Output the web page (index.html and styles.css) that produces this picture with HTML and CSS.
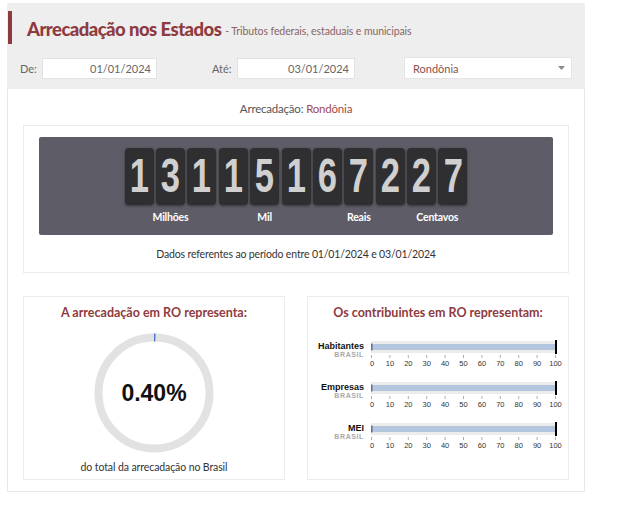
FILE: index.html
```html
<!DOCTYPE html>
<html lang="pt-BR">
<head>
<meta charset="utf-8">
<title>Arrecadação nos Estados</title>
<link rel="stylesheet" href="styles.css">
</head>
<body>
<div class="app">
  <header class="head">
    <div class="title-row">
      <h1 class="title">Arrecadação nos Estados</h1>
      <span class="subtitle">- Tributos federais, estaduais e municipais</span>
    </div>
    <div class="filters">
      <span class="flabel flabel-de">De:</span>
      <div class="input input-de">01/01/2024</div>
      <span class="flabel flabel-ate">Até:</span>
      <div class="input input-ate">03/01/2024</div>
      <div class="select">
        <span>Rondônia</span>
        <svg class="caret" width="7" height="4" viewBox="0 0 7 4"><path d="M0 0 L7 0 L3.5 4 Z" fill="#8a8a8a"/></svg>
      </div>
    </div>
  </header>

  <main class="content">
    <div class="state-line">Arrecadação: <span class="state-name">Rondônia</span></div>

    <section class="card counter-card">
      <div class="counter">
        <div class="tiles">
          <div class="tile"><span>1</span></div><div class="tile"><span>3</span></div><div class="tile"><span>1</span></div>
          <div class="tile"><span>1</span></div><div class="tile"><span>5</span></div><div class="tile"><span>1</span></div>
          <div class="tile"><span>6</span></div><div class="tile"><span>7</span></div><div class="tile"><span>2</span></div>
          <div class="tile"><span>2</span></div><div class="tile"><span>7</span></div>
          <div class="unit u-mi">Milhões</div>
          <div class="unit u-mil">Mil</div>
          <div class="unit u-re">Reais</div>
          <div class="unit u-ce">Centavos</div>
        </div>
      </div>
      <p class="period">Dados referentes ao período entre 01/01/2024 e 03/01/2024</p>
    </section>

    <div class="row">
      <section class="card share">
        <h2 class="card-title">A arrecadação em RO representa:</h2>
        <div class="donut">
          <svg width="122" height="122" viewBox="0 0 122 122">
            <circle cx="61" cy="61" r="55.5" fill="none" stroke="#e2e2e2" stroke-width="8"/>
            <path d="M61 5.5 A55.5 55.5 0 0 1 62.4 5.52" fill="none" stroke="#4a78c8" stroke-width="8"/>
          </svg>
          <span class="pct">0.40%</span>
        </div>
        <p class="share-note">do total da arrecadação no Brasil</p>
      </section>

      <section class="card contrib">
        <h2 class="card-title">Os contribuintes em RO representam:</h2>
        <div class="bars">
          <div class="bar-row">
            <div class="bar-label"><b>Habitantes</b><span>BRASIL</span></div>
            <svg class="bar-chart" width="190" height="31" viewBox="0 0 190 31">
              <rect x="0" y="1" width="186" height="12" fill="#ececec"/>
              <rect x="0" y="4" width="184" height="6" fill="#b3c6de"/>
              <rect x="0" y="3.5" width="1.5" height="7" fill="#5c6f8c"/>
              <rect x="184" y="0" width="2" height="14" fill="#000"/>
              <g class="ticks" stroke="#999" stroke-width="0.8">
                <line x1="0.5" y1="15" x2="0.5" y2="18"/><line x1="18.9" y1="15" x2="18.9" y2="18"/><line x1="37.3" y1="15" x2="37.3" y2="18"/><line x1="55.7" y1="15" x2="55.7" y2="18"/><line x1="74.1" y1="15" x2="74.1" y2="18"/><line x1="92.5" y1="15" x2="92.5" y2="18"/><line x1="110.9" y1="15" x2="110.9" y2="18"/><line x1="129.3" y1="15" x2="129.3" y2="18"/><line x1="147.7" y1="15" x2="147.7" y2="18"/><line x1="166.1" y1="15" x2="166.1" y2="18"/><line x1="184.5" y1="15" x2="184.5" y2="18"/>
              </g>
              <g class="axis-text" text-anchor="middle">
                <text x="1" y="26">0</text><text x="18.9" y="26">10</text><text x="37.3" y="26">20</text><text x="55.7" y="26">30</text><text x="74.1" y="26">40</text><text x="92.5" y="26">50</text><text x="110.9" y="26">60</text><text x="129.3" y="26">70</text><text x="147.7" y="26">80</text><text x="166.1" y="26">90</text><text x="184.5" y="26">100</text>
              </g>
            </svg>
          </div>
          <div class="bar-row">
            <div class="bar-label"><b>Empresas</b><span>BRASIL</span></div>
            <svg class="bar-chart" width="190" height="31" viewBox="0 0 190 31">
              <rect x="0" y="1" width="186" height="12" fill="#ececec"/>
              <rect x="0" y="4" width="184" height="6" fill="#b3c6de"/>
              <rect x="0" y="3.5" width="1.5" height="7" fill="#5c6f8c"/>
              <rect x="184" y="0" width="2" height="14" fill="#000"/>
              <g class="ticks" stroke="#999" stroke-width="0.8">
                <line x1="0.5" y1="15" x2="0.5" y2="18"/><line x1="18.9" y1="15" x2="18.9" y2="18"/><line x1="37.3" y1="15" x2="37.3" y2="18"/><line x1="55.7" y1="15" x2="55.7" y2="18"/><line x1="74.1" y1="15" x2="74.1" y2="18"/><line x1="92.5" y1="15" x2="92.5" y2="18"/><line x1="110.9" y1="15" x2="110.9" y2="18"/><line x1="129.3" y1="15" x2="129.3" y2="18"/><line x1="147.7" y1="15" x2="147.7" y2="18"/><line x1="166.1" y1="15" x2="166.1" y2="18"/><line x1="184.5" y1="15" x2="184.5" y2="18"/>
              </g>
              <g class="axis-text" text-anchor="middle">
                <text x="1" y="26">0</text><text x="18.9" y="26">10</text><text x="37.3" y="26">20</text><text x="55.7" y="26">30</text><text x="74.1" y="26">40</text><text x="92.5" y="26">50</text><text x="110.9" y="26">60</text><text x="129.3" y="26">70</text><text x="147.7" y="26">80</text><text x="166.1" y="26">90</text><text x="184.5" y="26">100</text>
              </g>
            </svg>
          </div>
          <div class="bar-row">
            <div class="bar-label"><b>MEI</b><span>BRASIL</span></div>
            <svg class="bar-chart" width="190" height="31" viewBox="0 0 190 31">
              <rect x="0" y="1" width="186" height="12" fill="#ececec"/>
              <rect x="0" y="4" width="184" height="6" fill="#b3c6de"/>
              <rect x="0" y="3.5" width="1.5" height="7" fill="#5c6f8c"/>
              <rect x="184" y="0" width="2" height="14" fill="#000"/>
              <g class="ticks" stroke="#999" stroke-width="0.8">
                <line x1="0.5" y1="15" x2="0.5" y2="18"/><line x1="18.9" y1="15" x2="18.9" y2="18"/><line x1="37.3" y1="15" x2="37.3" y2="18"/><line x1="55.7" y1="15" x2="55.7" y2="18"/><line x1="74.1" y1="15" x2="74.1" y2="18"/><line x1="92.5" y1="15" x2="92.5" y2="18"/><line x1="110.9" y1="15" x2="110.9" y2="18"/><line x1="129.3" y1="15" x2="129.3" y2="18"/><line x1="147.7" y1="15" x2="147.7" y2="18"/><line x1="166.1" y1="15" x2="166.1" y2="18"/><line x1="184.5" y1="15" x2="184.5" y2="18"/>
              </g>
              <g class="axis-text" text-anchor="middle">
                <text x="1" y="26">0</text><text x="18.9" y="26">10</text><text x="37.3" y="26">20</text><text x="55.7" y="26">30</text><text x="74.1" y="26">40</text><text x="92.5" y="26">50</text><text x="110.9" y="26">60</text><text x="129.3" y="26">70</text><text x="147.7" y="26">80</text><text x="166.1" y="26">90</text><text x="184.5" y="26">100</text>
              </g>
            </svg>
          </div>
        </div>
      </section>
    </div>
  </main>
</div>
</body>
</html>
```

FILE: styles.css
```css
* { box-sizing: border-box; }

body {
  margin: 0;
  background: #ffffff;
  font-family: Lato, "Open Sans", "Liberation Sans", sans-serif;
  color: #333;
}

.app {
  width: 578px;
  margin: 3px 0 0 7px;
}

/* header */
.head {
  background: #eeeeee;
  padding: 8px 0 10px 0;
}

.title-row {
  margin-left: 1px;
  height: 33px;
  border-left: 4px solid #8e3b40;
  padding: 3px 0 0 15px;
  display: flex;
  align-items: center;
  gap: 4px;
}

.title {
  margin: 0;
  font-size: 18.5px;
  font-weight: 900;
  letter-spacing: -0.55px;
  color: #8e3b40;
}

.subtitle {
  font-size: 10.5px;
  color: #8a6464;
  padding-top: 3px;
  letter-spacing: -0.1px;
}

.filters {
  margin-top: 13px;
  height: 22px;
  display: flex;
  align-items: center;
}

.flabel {
  font-size: 11px;
  color: #666;
}

.flabel-de { margin-left: 13px; width: 22px; }
.flabel-ate { margin-left: 55px; width: 25px; }

.input {
  height: 21px;
  background: #fff;
  border: 1px solid #e2e2e2;
  font-size: 11px;
  color: #666;
  text-align: right;
  padding: 3px 5px 0 0;
}

.input-de { width: 115px; }
.input-ate { width: 118px; }

.select {
  margin-left: 49px;
  width: 168px;
  height: 22px;
  background: #fff;
  border: 1px solid #e4e4e4;
  display: flex;
  align-items: center;
  justify-content: space-between;
  padding: 0 6px 0 8px;
  font-size: 11px;
  color: #8a5252;
}

.caret { display: block; }

/* content */
.content {
  border: 1px solid #e8e8e8;
  border-top: none;
  height: 403px;
  padding: 10px 15px 12px 15px;
  background: #fff;
}

.state-line {
  text-align: center;
  line-height: 20px;
  font-size: 11.5px;
  letter-spacing: -0.2px;
  color: #555;
  margin-bottom: 6px;
}

.state-name { color: #a04848; }

.card {
  border: 1px solid #ebebeb;
  background: #fff;
}

.counter-card {
  padding: 11px 15px 0 15px;
  height: 148px;
}

.counter {
  background: #5e5d67;
  border-radius: 2px;
  height: 98px;
  padding-top: 11px;
  display: flex;
  justify-content: center;
}

.tiles {
  display: grid;
  grid-template-columns: repeat(11, 29px);
  column-gap: 2.4px;
  grid-template-rows: 57px 18px;
}

.tile {
  background: #2f2f31;
  border-radius: 4px;
  box-shadow: 0 1px 3px rgba(0,0,0,0.45);
  color: #d0d0d0;
  font-family: "Liberation Sans", Arial, sans-serif;
  font-weight: 700;
  font-size: 48px;
  line-height: 55px;
  text-align: center;
  overflow: hidden;
}

.tile span {
  display: inline-block;
  transform: scaleX(0.72);
}

.unit {
  grid-row: 2;
  color: #fff;
  font-weight: 700;
  font-size: 10.5px;
  letter-spacing: -0.2px;
  text-align: center;
  line-height: 18px;
  padding-top: 3px;
}

.u-mi { grid-column: 1 / 4; }
.u-mil { grid-column: 4 / 7; }
.u-re { grid-column: 7 / 10; }
.u-ce { grid-column: 10 / 12; }

.period {
  margin: 12px 0 0 0;
  text-align: center;
  line-height: 14px;
  font-size: 10.5px;
  letter-spacing: -0.15px;
  color: #333;
}

.row {
  margin-top: 23px;
  display: flex;
  justify-content: space-between;
}

.share, .contrib {
  width: 262px;
  height: 184px;
}

.card-title {
  margin: 0;
  padding-top: 8px;
  text-align: center;
  line-height: 16px;
  font-size: 12.5px;
  font-weight: 700;
  color: #8e3b40;
}

.donut {
  margin: 11px auto 0 auto;
  width: 122px;
  height: 122px;
  display: grid;
  place-items: center;
}

.donut svg, .donut .pct { grid-area: 1 / 1; }

.pct {
  font-family: "Liberation Sans", Arial, sans-serif;
  font-weight: 700;
  font-size: 23px;
  color: #111;
}

.share-note {
  margin: 6px 0 0 0;
  text-align: center;
  font-size: 10.5px;
  letter-spacing: -0.1px;
  line-height: 14px;
  color: #333;
}

.bars {
  margin-top: 19px;
  display: flex;
  flex-direction: column;
  gap: 10px;
}

.bar-row {
  display: flex;
  align-items: flex-start;
  padding-left: 6px;
}

.bar-label {
  flex: 0 0 50px;
  margin-right: 7px;
  text-align: right;
  display: flex;
  flex-direction: column;
  font-family: "Liberation Sans", Arial, sans-serif;
}

.bar-label b {
  font-size: 9px;
  line-height: 10px;
  color: #111;
  padding-top: 1px;
  white-space: nowrap;
}

.bar-label span {
  font-size: 7px;
  line-height: 7px;
  color: #a8a8a8;
  letter-spacing: 0.6px;
  font-weight: 700;
}

.bar-chart { display: block; flex: 0 0 auto; overflow: visible; }

.axis-text {
  font-family: "Liberation Sans", Arial, sans-serif;
  font-size: 7.5px;
  fill: #333;
}
```
